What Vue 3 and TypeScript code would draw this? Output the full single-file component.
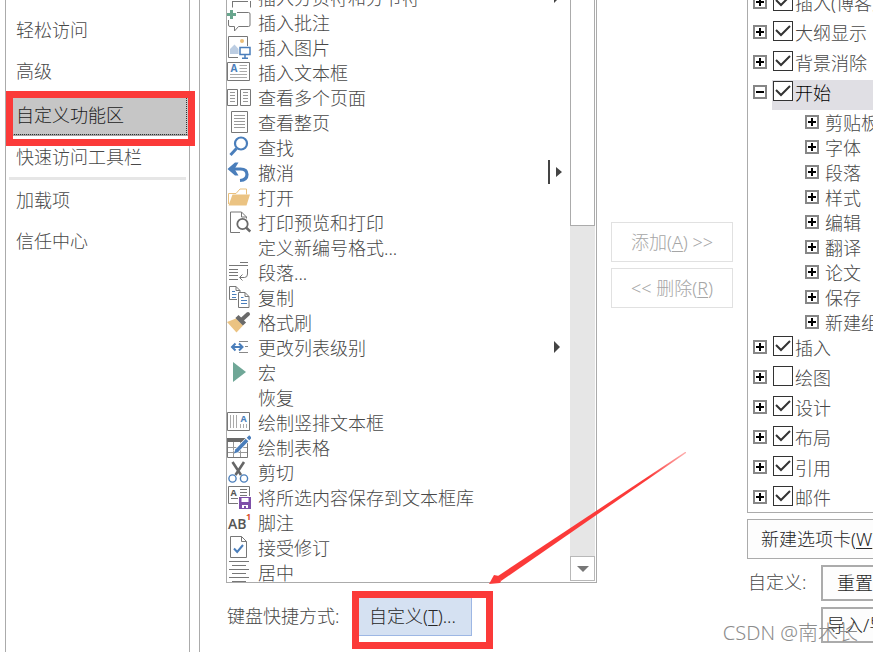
<script setup lang="ts">
import { ref } from 'vue'

interface Command {
  label: string
  icon?: string
  menu?: 'plain' | 'split'
}

interface Tab {
  label: string
  checked: boolean
  groups?: string[]
}

const G = 'fill="none" stroke="#777" stroke-width="1"'
const B = '#4a7ebb'

const icons: Record<string, string> = {
  pageBreak: `<path ${G} d="M5.5 16v6.500M23.500 16v6.500M5 16.500h16"/>`,
  comment: `<path ${G} d="M10 2.500h11.500q1.500 0 1.500 1.500v11q0 1.500-1.500 1.500H11.500L7.500 21v-4.500H3Q1.500 16.500 1.500 15V10"/><path fill="#69a68e" d="M3 0h3v3h3v3H6v3H3V6H0V3h3z"/>`,
  picture: `<path ${G} d="M11 22.500H1.500v-21h19V11"/><circle cx="15" cy="6" r="2" fill="#ecbf78"/><path fill="#bccde2" d="M3 19v-5l4.500-4.500L11.500 14v5z"/><path fill="#fff" stroke="${B}" stroke-width="1.500" d="M13 12.500h10v7H13z"/><path stroke="${B}" stroke-width="1.500" d="M18 19.500V23M15 23.300h6"/>`,
  textBox: `<path ${G} d="M.5 2.500h22v18H.5z"/><text x="3.500" y="12" font-family="Open Sans, sans-serif" font-weight="700" font-size="10" fill="${B}">A</text><path stroke="#aaa" d="M12.500 5.500h7.500M12.500 8.500h7.500M12.500 11.500h7.500M3 14.500h17M3 17.500h17"/>`,
  pages: `<path ${G} d="M.5 4.500h10v16H.5zM13.500 4.500h10v16h-10z"/><path stroke="#999" d="M3 7.500h5M3 10.500h5M3 13.500h5M3 16.500h5M16 7.500h5M16 10.500h5M16 13.500h5M16 16.500h5"/>`,
  page: `<path ${G} d="M4.500 1.500h16v21h-16z"/><path stroke="#999" d="M7 5.500h11M7 8.500h11M7 11.500h11M7 14.500h11M7 17.500h11"/>`,
  find: `<circle cx="14" cy="8.500" r="6" fill="none" stroke="${B}" stroke-width="2.200"/><path stroke="${B}" stroke-width="3" d="M9.500 13.500L3.500 20"/>`,
  undo: `<path fill="none" stroke="${B}" stroke-width="3.200" d="M4 9h9.500q6.500 0 6.500 5.500T13 20.500"/><path fill="${B}" d="M.5 9L8 2.500h3.500L7.500 9l4 6.500H8z"/>`,
  open: `<path fill="none" stroke="#e9c07d" d="M1.500 19V8.500H9L13 4h6.500v5.500"/><path fill="#ebc382" d="M5.500 9.500h17.500L19.500 20.500H1.500z"/>`,
  preview: `<path ${G} d="M13 22.500H3.500v-20.500H14.500l5 5v1.500M14.500 2v5h5"/><circle cx="15.500" cy="14" r="5.200" fill="#fff" stroke="#6a6a6a" stroke-width="1.800"/><path stroke="#6a6a6a" stroke-width="2.600" d="M19 17.500l4.300 4"/>`,
  paragraph: `<path ${G} d="M13 2.500h8M2 5.500h19M2 9.500h9M2 12.500h9M2 15.500h9M2 19.500h9M20.500 9v5q0 3.500-3 3.500H13M15.500 14.500L12.500 17.500l3 3"/>`,
  copy: `<path ${G} d="M10 14.500H2.500v-13h6.500l4 4v1.500M9 1.500v4h4M11.500 7.500h6.500l4 4v11H11.500zM18 7.500v4h4"/><path stroke="${B}" d="M5 6.500h3M5 9.500h4.500M5 12.500h4M14 12.500h2.500M14 15.500h6M14 18.500h6"/>`,
  brush: `<path fill="#ebc382" d="M0 12l9-3.500 7 7L9.500 22.500z"/><path stroke="#6a6a6a" stroke-width="4.500" d="M10 6.500l7.500 7.500"/><path stroke="#6a6a6a" stroke-width="4" stroke-linecap="round" d="M15 9.500l6-5.500"/>`,
  level: `<path stroke="#888" d="M12 6.500h9M18 11.500h3M12 17.500h9"/><path fill="none" stroke="${B}" stroke-width="2" d="M5 12h10.500M8.500 8.500L5 12l3.500 3.500M12 8.500l3.500 3.500-3.500 3.500"/>`,
  macro: `<path fill="#6fa797" d="M6 2l13 10L6 22z"/>`,
  verticalBox: `<path ${G} d="M.5 2.500h22v18H.5z"/><text x="13.500" y="12" font-family="Open Sans, sans-serif" font-weight="700" font-size="9" fill="${B}">A</text><path stroke="#aaa" d="M3.500 5v13M6.500 5v13M9.500 5v13M13.500 14v4M16.500 14v4M19.500 14v4"/>`,
  table: `<path ${G} d="M.5 3.500h20v19H.5z"/><path fill="#6a6a6a" d="M0 3h19v4H0z"/><path stroke="#999" d="M1 12.500h19M1 17.500h19M6.500 7v15M13.500 7v15"/><path stroke="#fff" stroke-width="5" d="M8 17.500L23 2"/><path stroke="${B}" stroke-width="3.600" d="M9.500 16L20 5M21 4l2.500-2.500"/><path fill="${B}" d="M7 18.500l1.500-4.500 3 3z"/>`,
  cut: `<path stroke="#666" stroke-width="2.600" d="M5.500 2l8.500 13M17 2L8.500 15"/><circle cx="5.500" cy="18.500" r="3.600" fill="none" stroke="${B}" stroke-width="1.400"/><circle cx="17" cy="18.500" r="3.600" fill="none" stroke="${B}" stroke-width="1.400"/>`,
  saveBox: `<path ${G} d="M11 18.500H1.500v-17h21V11M13 4.500h7M13 7.500h7M4 13.500h7M13 10.500h7"/><text x="3.500" y="10.500" font-family="Open Sans, sans-serif" font-weight="700" font-size="9" fill="#555">A</text><path fill="#7e4fa8" d="M12 12h12v12H12z"/><path fill="#fff" d="M14.500 13h7v4h-7zM15 20h6v3h-2v-2h-2v2h-2z"/>`,
  footnote: `<text x="1" y="18.500" font-family="Open Sans, sans-serif" font-weight="600" font-size="14" fill="#555">AB</text><text x="19" y="10" font-family="Open Sans, sans-serif" font-weight="700" font-size="9" fill="#d9502f">1</text>`,
  accept: `<path ${G} d="M3.500 1.500H14.500l5 5v16h-16zM14.500 1.500v5h5"/><path fill="none" stroke="${B}" stroke-width="2" d="M7 13.500l3.200 3.500L16 10"/>`,
  center: `<path ${G} d="M2 1.500h20M5 5.500h14M2 9.500h20M5 13.500h14M2 17.500h20M5 21.500h14"/>`,
}

const commands: Command[] = [
  { label: '插入分页符和分节符', icon: 'pageBreak', menu: 'plain' },
  { label: '插入批注', icon: 'comment' },
  { label: '插入图片', icon: 'picture' },
  { label: '插入文本框', icon: 'textBox' },
  { label: '查看多个页面', icon: 'pages' },
  { label: '查看整页', icon: 'page' },
  { label: '查找', icon: 'find' },
  { label: '撤消', icon: 'undo', menu: 'split' },
  { label: '打开', icon: 'open' },
  { label: '打印预览和打印', icon: 'preview' },
  { label: '定义新编号格式...' },
  { label: '段落...', icon: 'paragraph' },
  { label: '复制', icon: 'copy' },
  { label: '格式刷', icon: 'brush' },
  { label: '更改列表级别', icon: 'level', menu: 'plain' },
  { label: '宏', icon: 'macro' },
  { label: '恢复' },
  { label: '绘制竖排文本框', icon: 'verticalBox' },
  { label: '绘制表格', icon: 'table' },
  { label: '剪切', icon: 'cut' },
  { label: '将所选内容保存到文本框库', icon: 'saveBox' },
  { label: '脚注', icon: 'footnote' },
  { label: '接受修订', icon: 'accept' },
  { label: '居中', icon: 'center' },
]

const sections = [
  ['轻松访问', '高级', '自定义功能区', '快速访问工具栏'],
  ['加载项', '信任中心'],
]
const activeSection = ref('自定义功能区')

const tabs = ref<Tab[]>([
  { label: '插入(博客文章)', checked: true },
  { label: '大纲显示', checked: true },
  { label: '背景消除', checked: true },
  {
    label: '开始',
    checked: true,
    groups: ['剪贴板', '字体', '段落', '样式', '编辑', '翻译', '论文', '保存', '新建组'],
  },
  { label: '插入', checked: true },
  { label: '绘图', checked: false },
  { label: '设计', checked: true },
  { label: '布局', checked: true },
  { label: '引用', checked: true },
  { label: '邮件', checked: true },
])
</script>

<template>
  <div class="dialog">
    <nav class="sidebar">
      <template v-for="(group, i) in sections" :key="i">
        <hr v-if="i > 0" class="divider" />
        <button
          v-for="name in group"
          :key="name"
          type="button"
          class="section"
          :class="{ active: name === activeSection }"
          @click="activeSection = name"
        >
          {{ name }}
        </button>
      </template>
    </nav>

    <main class="content">
      <section class="commands">
        <div class="list-box">
          <ul class="list">
            <li v-for="cmd in commands" :key="cmd.label" class="command">
              <svg class="icon" viewBox="0 0 24 25" v-html="cmd.icon ? icons[cmd.icon] : ''"></svg>
              <span class="command-name">{{ cmd.label }}</span>
              <svg v-if="cmd.menu" class="menu-mark" viewBox="0 0 16 25">
                <path v-if="cmd.menu === 'split'" d="M0 0h2v24H0zM8 7l6 5-6 5z" />
                <path v-else d="M6 6l6 6-6 6z" />
              </svg>
            </li>
          </ul>
          <div class="scrollbar">
            <div class="thumb"></div>
            <button type="button" class="scroll-down" aria-label="向下滚动">
              <svg viewBox="0 0 12 6"><path d="M0 0h12L6 6z" /></svg>
            </button>
          </div>
        </div>
        <div class="shortcut">
          <span>键盘快捷方式:</span>
          <div class="shortcut-mark">
            <button type="button" class="customize">自定义(<u>T</u>)...</button>
          </div>
        </div>
        <svg class="arrow" viewBox="0 0 198 134">
          <defs>
            <linearGradient id="fade" x1="1" y1="0" x2="0" y2="1">
              <stop offset="0" stop-color="#fb3a39" stop-opacity="0.4" />
              <stop offset="0.2" stop-color="#fb3a39" />
            </linearGradient>
          </defs>
          <path fill="url(#fade)" d="M197 0l-1 0L9 124l3 5L197 1z" />
          <path fill="#fb3a39" d="M0 132l5-9 5 1 2 5-1 2z" />
        </svg>
      </section>

      <div class="transfer">
        <button type="button" disabled>添加(<u>A</u>) &gt;&gt;</button>
        <button type="button" disabled>&lt;&lt; 删除(<u>R</u>)</button>
      </div>

      <section class="ribbon">
        <div class="tree-box">
          <ul class="tree">
            <li v-for="tab in tabs" :key="tab.label">
              <div class="tab">
                <button type="button" class="expander" :aria-label="tab.label">
                  <svg viewBox="0 0 10 10"><path :d="tab.groups ? 'M1 4h8v2H1z' : 'M1 4h3V1h2v3h3v2H6v3H4V6H1z'" /></svg>
                </button>
                <label class="tab-label" :class="{ selected: tab.groups }">
                  <span class="check">
                    <input v-model="tab.checked" type="checkbox" />
                    <svg v-if="tab.checked" viewBox="0 0 20 20"><path d="M3 9l5 5 9-9" /></svg>
                  </span>
                  <span>{{ tab.label }}</span>
                </label>
              </div>
              <ul v-if="tab.groups" class="groups">
                <li v-for="g in tab.groups" :key="g" class="group">
                  <button type="button" class="expander" :aria-label="g">
                    <svg viewBox="0 0 10 10"><path d="M1 4h3V1h2v3h3v2H6v3H4V6H1z" /></svg>
                  </button>
                  <span>{{ g }}</span>
                </li>
              </ul>
            </li>
          </ul>
        </div>
        <button type="button" class="new-tab">新建选项卡(<u>W</u>)</button>
        <div class="custom">
          <span class="custom-label">自定义:</span>
          <div class="custom-buttons">
            <button type="button" class="reset">重置(<u>E</u>)</button>
            <button type="button" class="import">导入/导出(<u>P</u>)</button>
          </div>
        </div>
      </section>
    </main>
    <span class="watermark">CSDN @南木长</span>
  </div>
</template>

<style>
body {
  margin: 0;
  background: #fff;
}
</style>

<style scoped>
.dialog {
  position: relative;
  display: flex;
  box-sizing: border-box;
  height: 100vh;
  padding-left: 5px;
  overflow: hidden;
  color: #484848;
  font-family: 'Noto Sans', 'Noto Sans CJK SC', sans-serif;
  font-size: 18px;
  font-weight: 300;
  line-height: 25px;
  white-space: nowrap;
}

.dialog * {
  box-sizing: border-box;
}

button {
  margin: 0;
  color: inherit;
  font: inherit;
  white-space: nowrap;
}

ul {
  margin: 0;
  padding: 0;
  list-style: none;
}

svg {
  display: block;
}

u {
  text-decoration-thickness: 1px;
  text-underline-offset: 2px;
}

.sidebar {
  display: flex;
  flex-direction: column;
  flex: 0 0 185px;
  padding: 10px 3px;
  border: solid #ababab;
  border-width: 0 1px;
}

.section {
  height: 41px;
  padding: 0 7px;
  border: 0;
  background: none;
  text-align: left;
}

.section.active {
  position: relative;
  height: 40px;
  margin: 4px -2px 1px 0;
  background: #c6c6c6;
  border-bottom: 2px solid #a6a6a6;
  color: #1c1c1c;
  outline: 1px dotted #333;
  outline-offset: -2px;
}

.section.active::after {
  content: '';
  position: absolute;
  inset: -5px -7px -12px -3px;
  border: 7px solid #fb3a39;
}

.divider {
  width: 100%;
  height: 3px;
  margin: -1px 0 0;
  border: 0;
  background: #e6e6e6;
}

.content {
  display: flex;
  flex: 1;
  min-width: 0;
  margin-left: 9px;
  padding-left: 26px;
  border-left: 1px solid #ababab;
}

.commands {
  position: relative;
  display: flex;
  flex: 0 0 371px;
  flex-direction: column;
}

.list-box {
  display: flex;
  flex: 1;
  min-height: 0;
  overflow: hidden;
  border: solid #ababab;
  border-width: 0 1px 1px;
}

.list {
  flex: 1;
  margin-top: -15px;
  line-height: 27px;
}

.command {
  display: flex;
  gap: 7px;
  height: 25px;
}

.command-name {
  flex: 1;
}

.icon {
  width: 24px;
  height: 25px;
}

.menu-mark {
  width: 16px;
  height: 25px;
  margin-right: 6px;
  fill: #444;
}

.scrollbar {
  display: flex;
  flex: 0 0 25px;
  flex-direction: column;
  justify-content: space-between;
  margin: 0 1px 1px 0;
  background: #e6e6e6;
}

.thumb {
  height: 226px;
  border: solid #ababab;
  border-width: 0 1px 1px;
  background: #fff;
}

.scroll-down {
  display: grid;
  place-items: center;
  height: 25px;
  padding: 0;
  border: 1px solid #b8b8b8;
  background: #fff;
}

.scroll-down svg {
  width: 12px;
  height: 6px;
  fill: #777;
}

.shortcut {
  display: flex;
  align-items: flex-start;
  justify-content: space-between;
  height: 69px;
  padding: 8px 104px 0 1px;
}

.shortcut > span {
  padding-top: 13px;
}

.shortcut-mark {
  flex: none;
  width: 141px;
  height: 58px;
  border: 7px solid #fb3a39;
}

.customize {
  width: 113px;
  height: 38px;
  padding: 0 5px 0 0;
  border: solid #9db7e4;
  border-width: 0 1px 1px 0;
  background: #d5e1f2;
  color: #262626;
}

.arrow {
  position: absolute;
  right: -90px;
  bottom: 66px;
  width: 198px;
  height: 134px;
}

.transfer {
  display: flex;
  flex: 0 0 122px;
  flex-direction: column;
  gap: 6px;
  margin: 0 14px;
  padding-top: 222px;
}

.transfer button {
  height: 40px;
  padding: 0;
  border: 1px solid #e1e1e1;
  background: #fff;
  color: #a6a6a6;
}

.ribbon {
  display: flex;
  flex: 1;
  flex-direction: column;
  gap: 6px;
  min-width: 0;
  padding-bottom: 9px;
}

.tree-box {
  flex: 1;
  min-height: 0;
  overflow: hidden;
  border: solid #ababab;
  border-width: 0 0 1px 1px;
}

.tree {
  margin-top: -10px;
  line-height: 27px;
}

.tab {
  display: flex;
  gap: 5px;
  height: 30px;
  padding-left: 5px;
}

.expander {
  flex: none;
  width: 14px;
  height: 14px;
  margin-top: 5px;
  padding: 0;
  border: 2px solid #868686;
  background: #fff;
}

.expander svg {
  width: 10px;
  height: 10px;
  fill: #000;
}

.tab-label {
  display: flex;
  flex: 1;
  gap: 2px;
  padding-left: 1px;
}

.tab-label.selected {
  background: #e0dfe4;
  color: #000;
}

.check {
  display: grid;
  flex: none;
  width: 20px;
  height: 20px;
  margin-top: 1px;
}

.check > * {
  grid-area: 1 / 1;
}

.check input {
  appearance: none;
  width: 20px;
  height: 20px;
  margin: 0;
  border: 1px solid #333;
  background: #fff;
}

.check svg {
  z-index: 1;
  width: 20px;
  height: 20px;
  fill: none;
  stroke: #333;
  stroke-width: 2;
  pointer-events: none;
}

.group {
  display: flex;
  gap: 6px;
  height: 25px;
  padding-left: 57px;
}

.new-tab {
  height: 40px;
  padding: 0 13px;
  border: 1px solid #ababab;
  border-right: 0;
  background: #fdfdfd;
  color: #262626;
  text-align: left;
  overflow: hidden;
}

.custom {
  display: flex;
}

.custom-label {
  flex: 0 0 74px;
  padding: 5px 0 0 1px;
}

.custom-buttons {
  display: flex;
  flex: 1;
  flex-direction: column;
  gap: 6px;
  min-width: 0;
}

.custom-buttons button {
  height: 36px;
  border: 2px solid #ababab;
  border-right: 0;
  background: #fdfdfd;
  color: #262626;
  text-align: left;
  overflow: hidden;
}

.custom-buttons .reset {
  padding: 0 14px;
}

.custom-buttons .import {
  padding: 0 4px;
}

.watermark {
  position: absolute;
  right: 15px;
  bottom: 7px;
  color: #8c8c8c;
  font-size: 20px;
}
</style>
